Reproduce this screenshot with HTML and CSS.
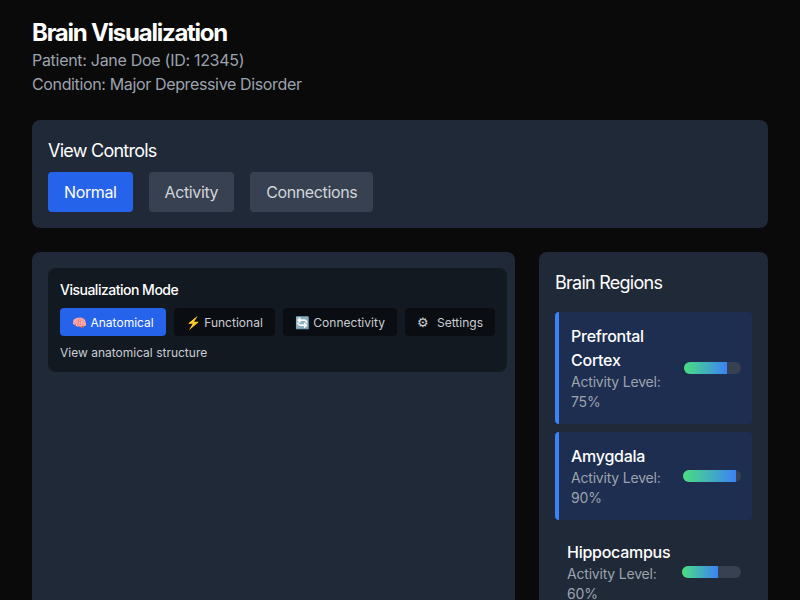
FILE: index.html
```html
<!DOCTYPE html>
<html lang="en">
<head>
    <meta charset="UTF-8">
    <title>Brain Visualization</title>
    <link rel="stylesheet" href="styles.css">
</head>
<body>
<div class="page">
    <div class="header">
        <h1>Brain Visualization</h1>
        <p class="patient">Patient: Jane Doe (ID: 12345)</p>
        <p>Condition: Major Depressive Disorder</p>
    </div>
    <div class="panel controls">
        <h2>View Controls</h2>
        <div class="control-row">
            <button class="control selected">Normal</button>
            <button class="control">Activity</button>
            <button class="control">Connections</button>
        </div>
    </div>
    <div class="main">
        <div class="panel viewer">
            <div class="mode-box">
                <h3>Visualization Mode</h3>
                <div class="mode-row">
                    <button class="mode selected">🧠 Anatomical</button>
                    <button class="mode">⚡ Functional</button>
                    <button class="mode">🔄 Connectivity</button>
                    <button class="mode"><span class="gear">⚙</span>Settings</button>
                </div>
                <p class="mode-note">View anatomical structure</p>
            </div>
        </div>
        <div class="panel regions">
            <h2>Brain Regions</h2>
            <div class="region-list">
                <div class="region active">
                    <div class="region-text">
                        <h4>Prefrontal Cortex</h4>
                        <p>Activity Level: 75%</p>
                    </div>
                    <div class="bar"><div class="fill" style="width: 75%"></div></div>
                </div>
                <div class="region active">
                    <div class="region-text">
                        <h4>Amygdala</h4>
                        <p>Activity Level: 90%</p>
                    </div>
                    <div class="bar"><div class="fill" style="width: 90%"></div></div>
                </div>
                <div class="region">
                    <div class="region-text">
                        <h4>Hippocampus</h4>
                        <p>Activity Level: 60%</p>
                    </div>
                    <div class="bar"><div class="fill" style="width: 60%"></div></div>
                </div>
            </div>
        </div>
    </div>
</div>
</body>
</html>
```

FILE: styles.css
```css
*{
    margin: 0;
    padding: 0;
    box-sizing: border-box;
}
body{
    background: #0a0a0a;
    color: #fff;
    font-family: Inter, "Noto Sans", sans-serif;
}
button{
    border: 0;
    font-family: inherit;
    cursor: pointer;
}
.page{
    padding: 16px 32px 32px;
}
.header{
    margin-bottom: 24px;
}
.header h1{
    padding-top: 1px;
    font-size: 24px;
    line-height: 31px;
    font-weight: 700;
    letter-spacing: -1.25px;
}
.header p{
    font-size: 16px;
    line-height: 24px;
    color: #9ca3af;
    letter-spacing: -0.36px;
}
.header .patient{
    letter-spacing: -0.29px;
}
.panel{
    background: #1f2937;
    border-radius: 8px;
    padding: 16px;
}
.panel h2{
    font-size: 18px;
    line-height: 30px;
    font-weight: 400;
    letter-spacing: -0.75px;
}
.controls{
    margin-bottom: 24px;
}
.control-row{
    display: flex;
    gap: 16px;
    margin-top: 6px;
}
.control{
    height: 40px;
    padding: 0 16px;
    border-radius: 4px;
    background: #374151;
    color: #d1d5db;
    font-size: 16px;
    letter-spacing: -0.38px;
}
.control.selected{
    background: #2563eb;
    color: #fff;
}
.main{
    display: grid;
    grid-template-columns: 1fr 229.3px;
    gap: 24px;
}
.viewer{
    padding-right: 8px;
}
.mode-box{
    background: #131921;
    border-radius: 8px;
    padding: 12px 12px 10px;
}
.mode-box h3{
    font-size: 14px;
    line-height: 20px;
    font-weight: 500;
    letter-spacing: -0.5px;
    margin-bottom: 8px;
}
.mode-row{
    display: flex;
    gap: 8px;
    margin-bottom: 8px;
}
.mode{
    flex: none;
    height: 28px;
    padding: 0 12px;
    border-radius: 4px;
    background: #0a0d12;
    color: #c9cdd3;
    font-size: 12px;
    letter-spacing: 0.02px;
    white-space: nowrap;
}
.mode.selected{
    background: #2563eb;
    color: #fff;
}
.gear{
    display: inline-block;
    width: 20px;
    font-size: 13px;
    text-align: left;
}
.mode-note{
    font-size: 12px;
    line-height: 18px;
    color: #c9cdd3;
}
.region-list{
    display: flex;
    flex-direction: column;
    gap: 8px;
    margin-top: 14px;
}
.region{
    display: flex;
    align-items: center;
    justify-content: space-between;
    padding: 12px 11px 12px 12px;
    border-radius: 4px;
}
.region.active{
    background: #1e2e50;
    border-left: 4px solid #3b82f6;
}
.region h4{
    font-size: 16px;
    line-height: 24px;
    font-weight: 500;
    letter-spacing: -0.27px;
}
.region p{
    font-size: 14px;
    line-height: 20px;
    color: #9ca3af;
    letter-spacing: -0.2px;
}
.bar{
    width: 64px;
    height: 12px;
    border-radius: 9999px;
    background: #374151;
    overflow: hidden;
}
.fill{
    height: 100%;
    background: linear-gradient(to right, #4ade80, #3b82f6);
}
```
